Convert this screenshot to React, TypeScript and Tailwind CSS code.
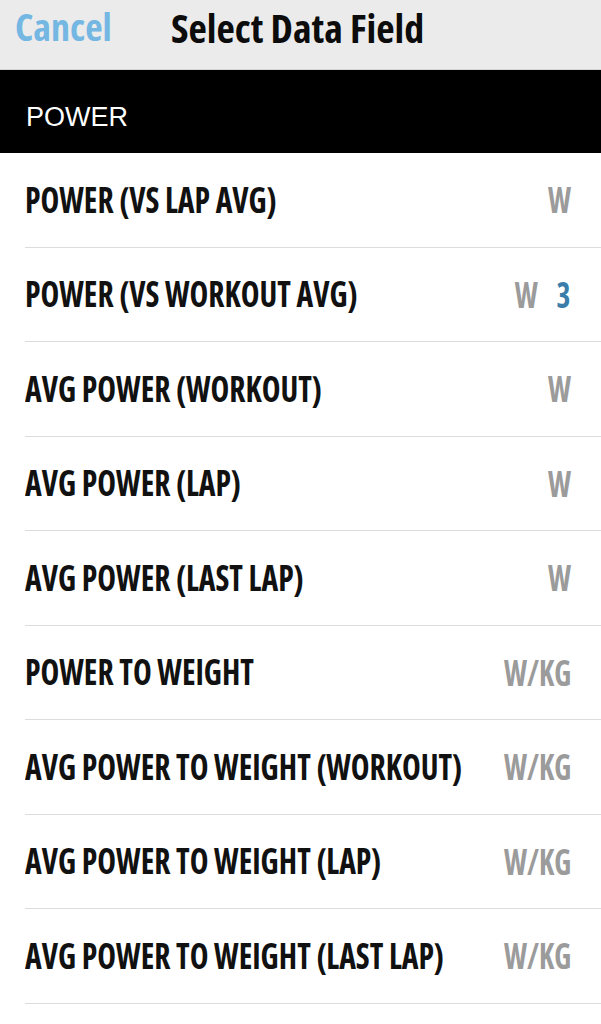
const rows: { label: string; unit: string; badge?: string }[] = [
  { label: 'POWER (VS LAP AVG)', unit: 'W' },
  { label: 'POWER (VS WORKOUT AVG)', unit: 'W', badge: '3' },
  { label: 'AVG POWER (WORKOUT)', unit: 'W' },
  { label: 'AVG POWER (LAP)', unit: 'W' },
  { label: 'AVG POWER (LAST LAP)', unit: 'W' },
  { label: 'POWER TO WEIGHT', unit: 'W/KG' },
  { label: 'AVG POWER TO WEIGHT (WORKOUT)', unit: 'W/KG' },
  { label: 'AVG POWER TO WEIGHT (LAP)', unit: 'W/KG' },
  { label: 'AVG POWER TO WEIGHT (LAST LAP)', unit: 'W/KG' },
];

export default function App() {
  return (
    <div className="w-[601px] h-[1024px] overflow-hidden bg-white font-['Open_Sans',sans-serif]">
      <header className="h-[70px] bg-[#ebebeb] border-b border-[#d4d4d4] flex items-start">
        <div className="pl-[15px] w-[171px] shrink-0 text-[38px] leading-[1.4] font-bold font-stretch-condensed text-[#74b7e3]">
          Cancel
        </div>
        <div className="pr-2 text-[40px] leading-[1.4] font-bold font-stretch-condensed text-[#0c0c0c] whitespace-nowrap">
          Select Data Field
        </div>
      </header>
      <div className="h-[83px] bg-black pl-[26px] pt-[34px]">
        <div className="font-['Liberation_Sans',Arial,sans-serif] text-[27px] leading-none text-white">POWER</div>
      </div>
      <div className="flex flex-col">
        {rows.map((r) => (
          <div key={r.label} className="h-[94.5px] pl-[25px]">
            <div className="h-full border-b border-[#dcdcdc] flex items-center pr-[30px]">
              <div className="flex-1 min-w-0">
                <div className="text-[36px] leading-none font-bold font-stretch-condensed text-[#111] whitespace-nowrap origin-left scale-x-[0.88]">
                  {r.label}
                </div>
              </div>
              <div className="shrink-0 flex items-center gap-[22px] text-[35px] leading-none font-bold font-stretch-condensed whitespace-nowrap origin-right scale-x-[0.85]">
                <span className="text-[#9b9b9b]">{r.unit}</span>
                {r.badge && <span className="text-[#3b7daa]">{r.badge}</span>}
              </div>
            </div>
          </div>
        ))}
      </div>
    </div>
  );
}
